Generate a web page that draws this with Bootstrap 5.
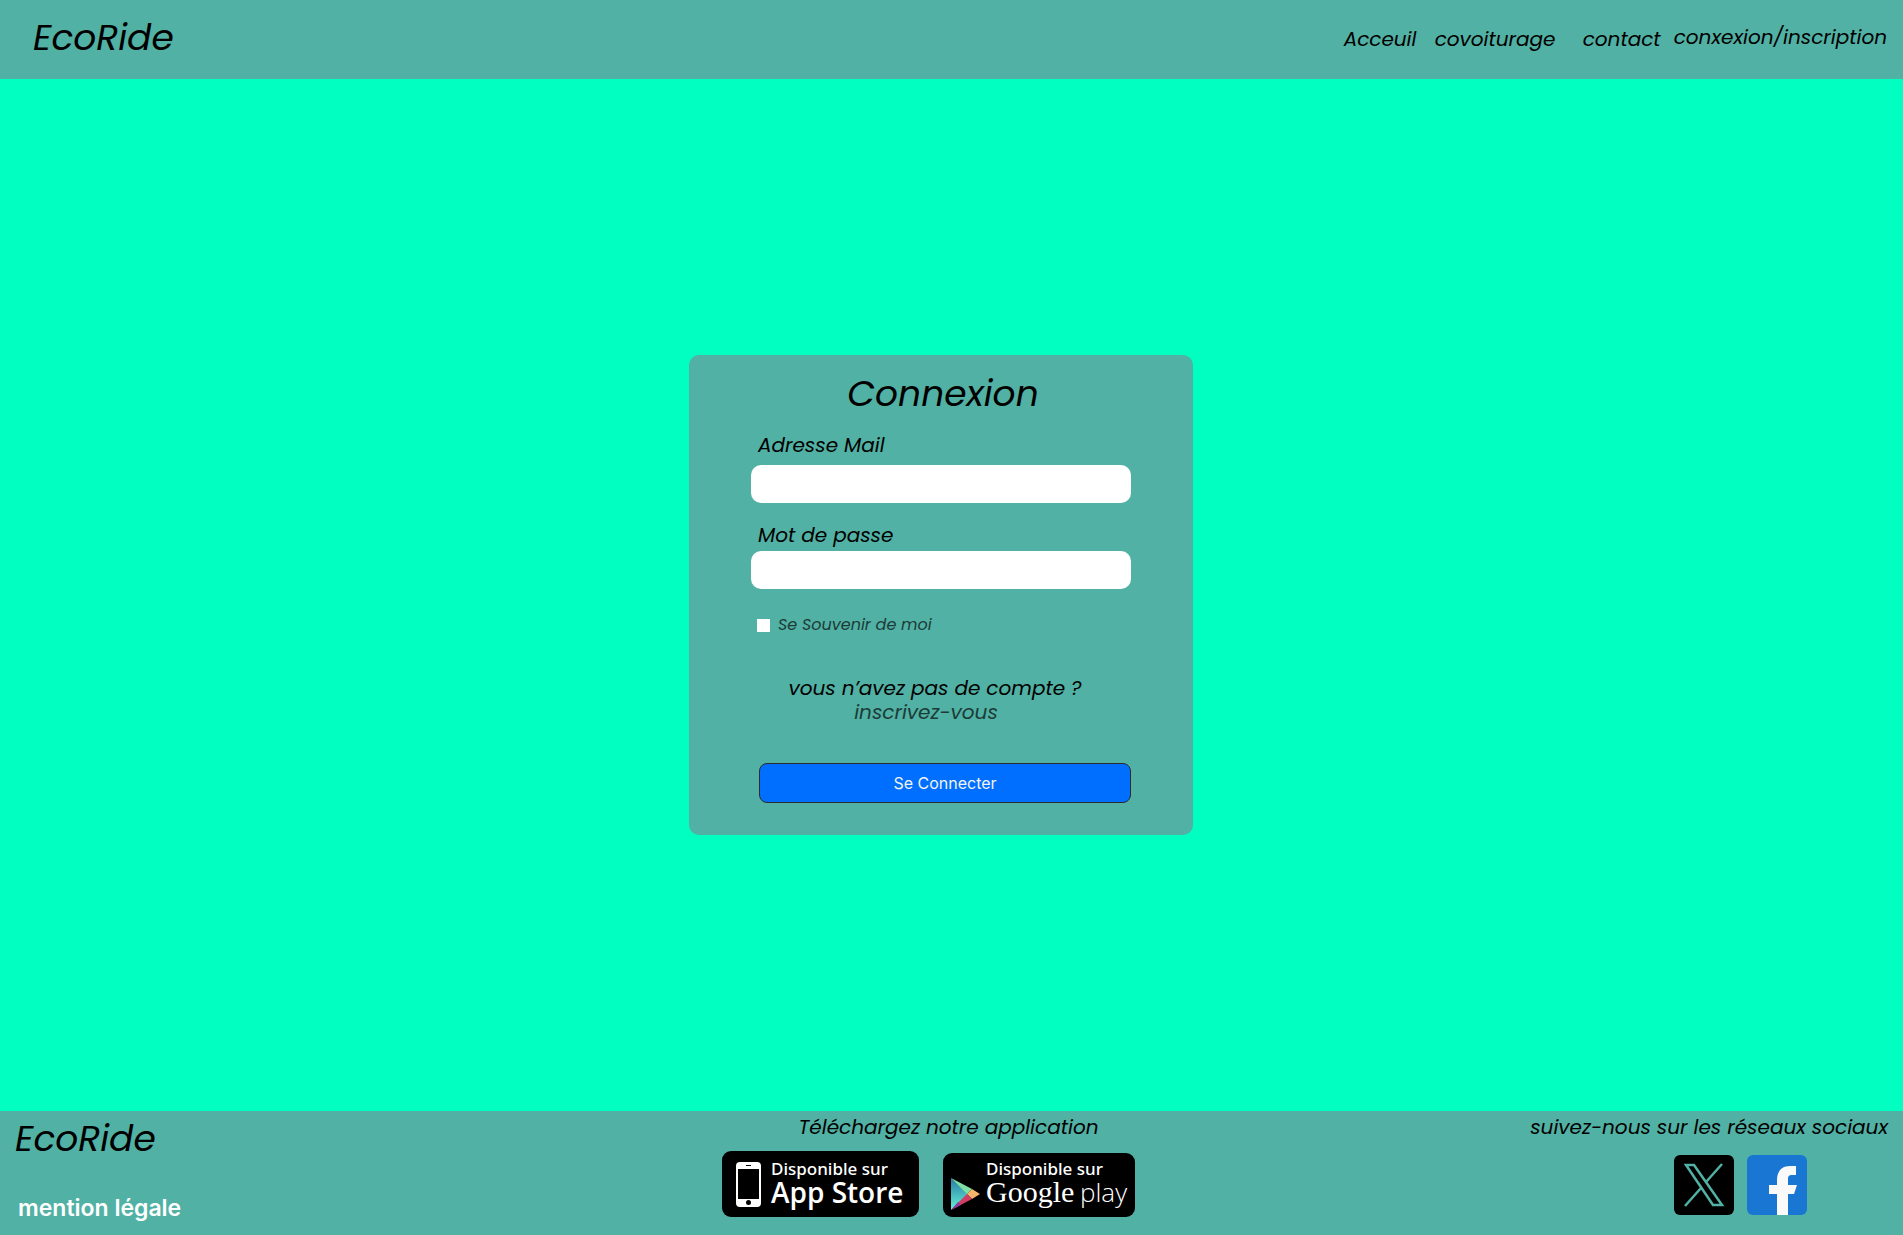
<!DOCTYPE html>
<html lang="fr">
<head>
<meta charset="utf-8">
<meta name="viewport" content="width=device-width, initial-scale=1">
<title>EcoRide - Connexion</title>
<link href="https://cdn.jsdelivr.net/npm/bootstrap@5.3.0/dist/css/bootstrap.min.css" rel="stylesheet">
<style>
  :root { --eco-bar: #51b1a4; --eco-page: #00ffc0; }
  body { background: var(--eco-page); color: #000; font-family: Poppins, Inter, sans-serif; font-size: 20px; line-height: 24px; }
  .eco-bar { background: var(--eco-bar); }
  .eco-text { font-style: italic; }
  .eco-title { font-size: 36px; line-height: 48px; font-style: italic; font-weight: 400; }
  .eco-header { min-height: 79px; padding: 13px 16px 17px 33px; }
  .eco-nav { display: grid; grid-template-columns: 91px 148px 91px auto; }
  .eco-nav a, .eco-footer a { color: #000; text-decoration: none; }
  .eco-nav a:not(:last-child) { padding-top: 2px; }
  .eco-main { padding-right: 21px; }
  .eco-card { width: 504px; max-width: 100%; min-height: 480px; border-radius: 10px; padding: 15px 62px 32px; }
  .eco-card .eco-title { padding-left: 4px; margin-bottom: 15px; }
  .eco-card label { padding-left: 7px; }
  .eco-input { height: 38px; border: 0; border-radius: 10px; }
  .eco-remember-row { padding-left: 6px; }
  .eco-check { width: 13px; height: 13px; appearance: none; background: #fff; margin: 0; }
  .eco-check:checked { background: #006fff; }
  .eco-card .eco-remember { font-size: 16px; padding-left: 8px; color: #1c3b37; }
  .eco-ask { padding-right: 12px; }
  .eco-signup { color: #1c3b37; text-decoration: none; padding-right: 18px; }
  .eco-submit { height: 40px; margin-left: 8px; background: #006fff; border: 1px solid #2c2c2c; border-radius: 8px; color: #f3f3f3; font: 400 16px/16px Inter, sans-serif; }
  .eco-footer { min-height: 124px; padding: 4px 15px 12px; }
  .eco-footer .eco-legal { color: #fff; font: 600 23px/30px Inter, sans-serif; padding-left: 3px; }
  .eco-side { flex: 1 1 0; }
  .eco-apps { padding-right: 46px; }
  .eco-apps-title { padding-left: 40px; }
  .eco-social { padding-right: 81px; gap: 13px; }
  svg { display: block; }
</style>
<script src="https://cdn.jsdelivr.net/npm/bootstrap@5.3.0/dist/js/bootstrap.bundle.min.js"></script>
</head>
<body class="min-vh-100 d-flex flex-column">
<header class="eco-bar eco-header d-flex flex-wrap justify-content-between align-items-center">
  <a class="eco-title text-black text-decoration-none" href="#">EcoRide</a>
  <nav class="eco-nav eco-text" aria-label="Navigation principale">
    <a href="#">Acceuil</a><a href="#">covoiturage</a><a href="#">contact</a><a href="#">conxexion/inscription</a>
  </nav>
</header>

<main class="eco-main flex-grow-1 d-flex justify-content-center align-items-center">
  <form class="eco-card eco-bar eco-text d-flex flex-column">
    <h1 class="eco-title text-center">Connexion</h1>
    <label class="mb-2" for="mail">Adresse Mail</label>
    <input class="eco-input form-control" type="email" id="mail">
    <label class="mt-3 pt-1 mb-1" for="pass">Mot de passe</label>
    <input class="eco-input form-control mb-4" type="password" id="pass">
    <div class="eco-remember-row d-flex align-items-center">
      <input class="eco-check" type="checkbox" id="remember"><label class="eco-remember" for="remember">Se Souvenir de moi</label>
    </div>
    <div class="eco-ask text-center mt-auto mb-auto">
      <div>vous n’avez pas de compte ?</div>
      <a class="eco-signup" href="#">inscrivez-vous</a>
    </div>
    <button class="eco-submit" type="submit">Se Connecter</button>
  </form>
</main>

<footer class="eco-bar eco-footer d-flex flex-wrap justify-content-between">
  <div class="eco-side d-flex flex-column justify-content-between align-items-start">
    <a class="eco-title" href="#">EcoRide</a>
    <a class="eco-legal" href="#">mention légale</a>
  </div>
  <div class="eco-apps eco-text">
    <div class="eco-apps-title text-center">Téléchargez notre application</div>
    <div class="d-flex align-items-end mt-2 pt-1 gap-4">
      <a href="#"><svg width="197" height="66" viewBox="0 0 197 66">
        <rect width="197" height="66" rx="9"/>
        <rect x="14" y="11" width="25" height="45" rx="4" fill="#fff"/>
        <rect x="16" y="18" width="21" height="30"/>
        <rect x="24" y="14" width="5" height="1"/><circle cx="26.500" cy="51.500" r="2.500"/>
        <g fill="#fff" font-style="normal">
          <text x="49" y="24" font-size="17" font-weight="500" font-family="Noto Sans, sans-serif">Disponible sur</text>
          <text x="49" y="52" font-size="28" font-weight="600" font-family="Open Sans, sans-serif">App Store</text>
        </g></svg></a>
      <a href="#"><svg width="192" height="64" viewBox="0 0 192 64">
        <defs>
          <linearGradient id="play" x1="0" y1="0" x2="0" y2="1"><stop offset="0" stop-color="#2a79a8"/><stop offset="1" stop-color="#62f5d4"/></linearGradient>
        </defs>
        <rect width="192" height="64" rx="9"/>
        <path d="M8 25 25 41 8 57Z" fill="url(#play)"/>
        <path d="M8 25 29 36 24 41Z" fill="#7fe0a4"/>
        <path d="M29 36 37 41 29 46 24 41Z" fill="#f6b56b"/>
        <path d="M24 41 29 46 8 57Z" fill="#d33d63"/>
        <path d="M8 57 15 49 18 52Z" fill="#8f3aa0"/>
        <g fill="#fff" font-style="normal">
          <text x="43" y="22" font-size="17" font-weight="500" font-family="Noto Sans, sans-serif">Disponible sur</text>
          <text x="43" y="49" font-size="30" font-weight="400" font-family="Liberation Serif, serif">Google</text>
          <text x="137" y="49" font-size="26" font-weight="300" font-family="Open Sans, sans-serif">play</text>
        </g></svg></a>
    </div>
  </div>
  <div class="eco-side eco-text text-end">
    <div>suivez-nous sur les réseaux sociaux</div>
    <div class="eco-social d-flex justify-content-end mt-3">
      <a href="#" aria-label="X"><svg width="60" height="60" viewBox="0 0 60 60">
        <rect width="60" height="60" rx="6"/>
        <g fill="none" stroke="#51b1a4" stroke-width="2.500"><path d="M12 10H20L48 50H39Z"/><path d="M48 9 32 27M27 33 11 51"/></g></svg></a>
      <a href="#" aria-label="Facebook"><svg width="60" height="60" viewBox="0 0 60 60">
        <rect width="60" height="60" rx="6" fill="#1976d2"/>
        <path d="M30 60V39H22V30H30V25C30 16 35 11 43 11H49V20H45C42 20 41 21 41 24V30H50L47 39H41V60Z" fill="#fafafa"/></svg></a>
    </div>
  </div>
</footer>
</body>
</html>
